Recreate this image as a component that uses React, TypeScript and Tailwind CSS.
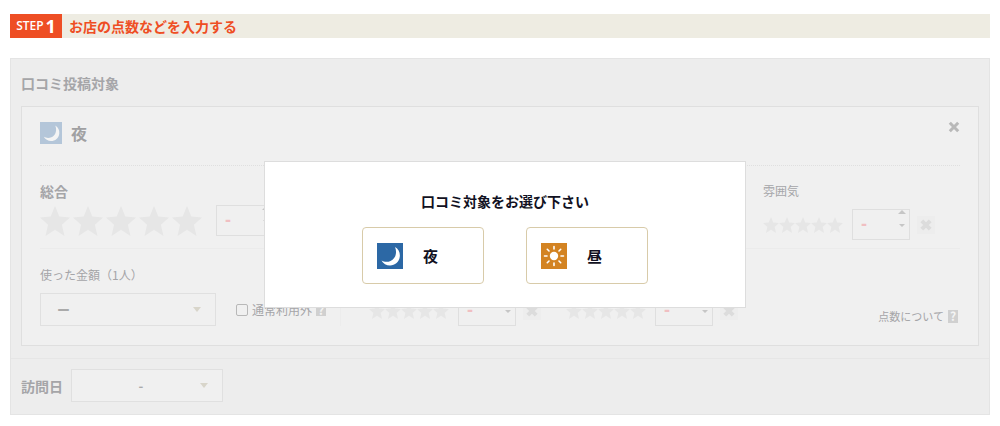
import clsx from "clsx";
import { ReactNode, useState } from "react";

const STAR =
  "M15 0L19.3 10.500L30 11.400L21.900 18.700L24.500 30L15 23.800L5.500 30L8.100 18.700L0 11.400L10.700 10.500Z";

const Stars = ({ large }: { large?: boolean }) => {
  return (
    <div className={clsx("flex", large && "gap-[3px]")}>
      {[1, 2, 3, 4, 5].map((item) => (
        <svg
          key={item}
          viewBox="0 0 30 30"
          className={clsx("fill-[#e6e6e6]", large ? "size-[30px]" : "size-4")}
        >
          <path d={STAR} />
        </svg>
      ))}
    </div>
  );
};

const MoonIcon = ({ className }: { className: string }) => {
  return (
    <svg viewBox="0 0 26 26" className={className}>
      <rect width="26" height="26" fill="#2c68a5" />
      <path
        d="M18 4C21.500 6 23.200 9.500 22.800 13.500C22.200 19 18 22.500 13 22.500C9.500 22.500 6 20.500 4.500 17.500C7 19 10.500 19.400 13.500 18C18.800 15.500 20.300 9.500 18 4Z"
        fill="#fff"
      />
    </svg>
  );
};

const SunIcon = ({ className }: { className: string }) => {
  return (
    <svg viewBox="0 0 26 26" className={className}>
      <rect width="26" height="26" fill="#d38322" />
      <circle cx="13" cy="13" r="4.200" fill="#fff" />
      <path
        d="M13 3.500V6M13 20V22.500M3.500 13H6M20 13H22.500M6.300 6.300L8 8M18 18L19.700 19.700M6.300 19.700L8 18M18 8L19.700 6.300"
        stroke="#fff"
        strokeWidth="1.600"
        strokeLinecap="round"
      />
    </svg>
  );
};

const Cross = ({ className }: { className: string }) => {
  return (
    <svg viewBox="0 0 12 12" className={className}>
      <path d="M1.800 1.800L10.200 10.200M10.200 1.800L1.800 10.200" />
    </svg>
  );
};

const Help = ({ label }: { label: string }) => {
  return (
    <a
      href="#help"
      aria-label={label}
      className="flex h-[13px] w-[10px] items-center justify-center bg-[#d0d0d0] text-[12px] leading-3 font-bold text-[#f4f4f4]"
    >
      ?
    </a>
  );
};

const Score = ({ name, large }: { name: string; large?: boolean }) => {
  return (
    <div className="flex items-center">
      <Stars large={large} />
      <div className={clsx("relative", large ? "ml-[14px]" : "ml-[9px]")}>
        <input
          type="text"
          aria-label={name}
          defaultValue="-"
          className="block h-[31px] w-[58px] border border-[#dfdfdf] px-2 font-['Liberation_Sans',sans-serif] text-[18px] font-bold text-[#f0bfc2]"
        />
        <svg
          viewBox="0 0 8 20"
          className="pointer-events-none absolute top-0 right-1 h-5 w-2 fill-[#c6c6c6]"
        >
          <path d="M0 5L4 1L8 5ZM1 15H7L4 18Z" />
        </svg>
      </div>
      {!large && (
        <button
          aria-label="クリア"
          className="ml-[7px] flex size-[18px] items-center justify-center bg-[#ededed]"
        >
          <Cross className="size-3 stroke-[#dcdcdc] stroke-4" />
        </button>
      )}
    </div>
  );
};

const Dropdown = ({
  label,
  value,
  className,
}: {
  label: string;
  value: string;
  className: string;
}) => {
  return (
    <div className="relative">
      <select
        aria-label={label}
        className={clsx(
          "block h-[33px] appearance-none border border-[#e0e0e0] bg-[#f0f0f0] text-[13px] font-bold text-[#aaaaaa]",
          className
        )}
      >
        <option>{value}</option>
      </select>
      <svg
        viewBox="0 0 8 5"
        className="pointer-events-none absolute top-[14px] right-[15px] h-[5px] w-2 fill-[#d8d5ca]"
      >
        <path d="M0 0H8L4 5Z" />
      </svg>
    </div>
  );
};

const ChoiceButton = ({
  icon,
  label,
  onClick,
}: {
  icon: ReactNode;
  label: string;
  onClick: () => void;
}) => {
  return (
    <button
      onClick={onClick}
      className="flex h-[57px] w-[122px] items-center gap-5 rounded-sm border border-[#d8cba9] px-[14px] text-[15px] font-bold"
    >
      {icon}
      {label}
    </button>
  );
};

const App = () => {
  const [showModal, setShowModal] = useState<boolean>(true);

  return (
    <main className="px-[10px] pt-[14px] pb-3 font-['Noto_Sans_CJK_JP',sans-serif] text-[12px] leading-5 text-[#a5a5a8]">
      <h1 className="flex h-6 items-center bg-[#eeece2] text-[14px] font-bold text-[#ee4e24]">
        <span className="flex h-6 w-[52px] items-center justify-center gap-[2px] bg-[#ee4e24] font-['Open_Sans',sans-serif] text-[12px] font-semibold text-white">
          STEP
          <span className="text-[18px] font-bold">1</span>
        </span>
        <span className="ml-[7px]">お店の点数などを入力する</span>
      </h1>

      <div className="relative mt-5 border border-[#e4e4e4] bg-[#ededed]">
        <section className="px-[10px] pb-3">
          <h2 className="pt-[14px] pb-[13px] text-[14px] font-bold">
            口コミ投稿対象
          </h2>
          <div className="border border-[#dfdfdf] bg-[#f0f0f0] px-[18px] pb-[19px]">
            <div className="flex h-[58px] items-start justify-between pt-[14px]">
              <h3 className="flex items-center gap-[9px] text-[16px] leading-6 font-bold text-[#a0a0a2]">
                <MoonIcon className="size-[22px] opacity-30" />夜
              </h3>
              <button aria-label="閉じる">
                <Cross className="size-3 stroke-[#b8b8b8] stroke-3" />
              </button>
            </div>

            <div className="grid grid-cols-[1fr_197px] border-t border-dotted border-[#dfdfdf] pt-[15px] pb-2">
              <div>
                <div className="text-[14px] font-bold">総合</div>
                <div className="mt-1">
                  <Score name="総合" large />
                </div>
              </div>
              <div>
                <div>雰囲気</div>
                <div className="mt-2">
                  <Score name="雰囲気" />
                </div>
              </div>
            </div>

            <div className="grid grid-cols-[1fr_197px_197px_197px] border-t border-[#ebebeb] pt-4">
              <div className="mr-7 border-r border-[#ececec]">
                <div>使った金額（1人）</div>
                <div className="mt-2 flex items-center gap-5">
                  <Dropdown
                    label="使った金額（1人）"
                    value="ー"
                    className="w-[176px] pl-4"
                  />
                  <div className="flex items-center gap-1">
                    <label className="flex items-center gap-1 whitespace-nowrap">
                      <input
                        type="checkbox"
                        className="size-3 appearance-none rounded-xs border border-[#b8b8b8]"
                      />
                      通常利用外
                    </label>
                    <Help label="通常利用外について" />
                  </div>
                </div>
              </div>
              <div className="self-end">
                <Score name="サービス" />
              </div>
              <div className="self-end">
                <Score name="料理・味" />
              </div>
              <div className="flex items-center justify-end gap-1 self-end pr-[2px] text-[11px]">
                点数について
                <Help label="点数について" />
              </div>
            </div>
          </div>
        </section>

        <section className="flex items-center gap-2 border-t border-[#e6e6e6] px-[10px] pt-[10px] pb-3">
          <h2 className="text-[14px] font-bold">訪問日</h2>
          <Dropdown
            label="訪問日"
            value="-"
            className="w-[152px] pr-3 text-center"
          />
        </section>

        {showModal && (
          <div className="absolute inset-x-0 top-[102px] flex justify-center pl-[10px]">
            <div
              role="dialog"
              aria-labelledby="choice-title"
              className="w-[482px] border border-[#dddddd] bg-white pt-[29px] pb-[23px] text-[#111122]"
            >
              <p
                id="choice-title"
                className="text-center text-[14px] font-bold"
              >
                口コミ対象をお選び下さい
              </p>
              <div className="mt-4 flex justify-center gap-[42px]">
                <ChoiceButton
                  icon={<MoonIcon className="size-[26px]" />}
                  label="夜"
                  onClick={() => setShowModal(false)}
                />
                <ChoiceButton
                  icon={<SunIcon className="size-[26px]" />}
                  label="昼"
                  onClick={() => setShowModal(false)}
                />
              </div>
            </div>
          </div>
        )}
      </div>
    </main>
  );
};

export default App;
